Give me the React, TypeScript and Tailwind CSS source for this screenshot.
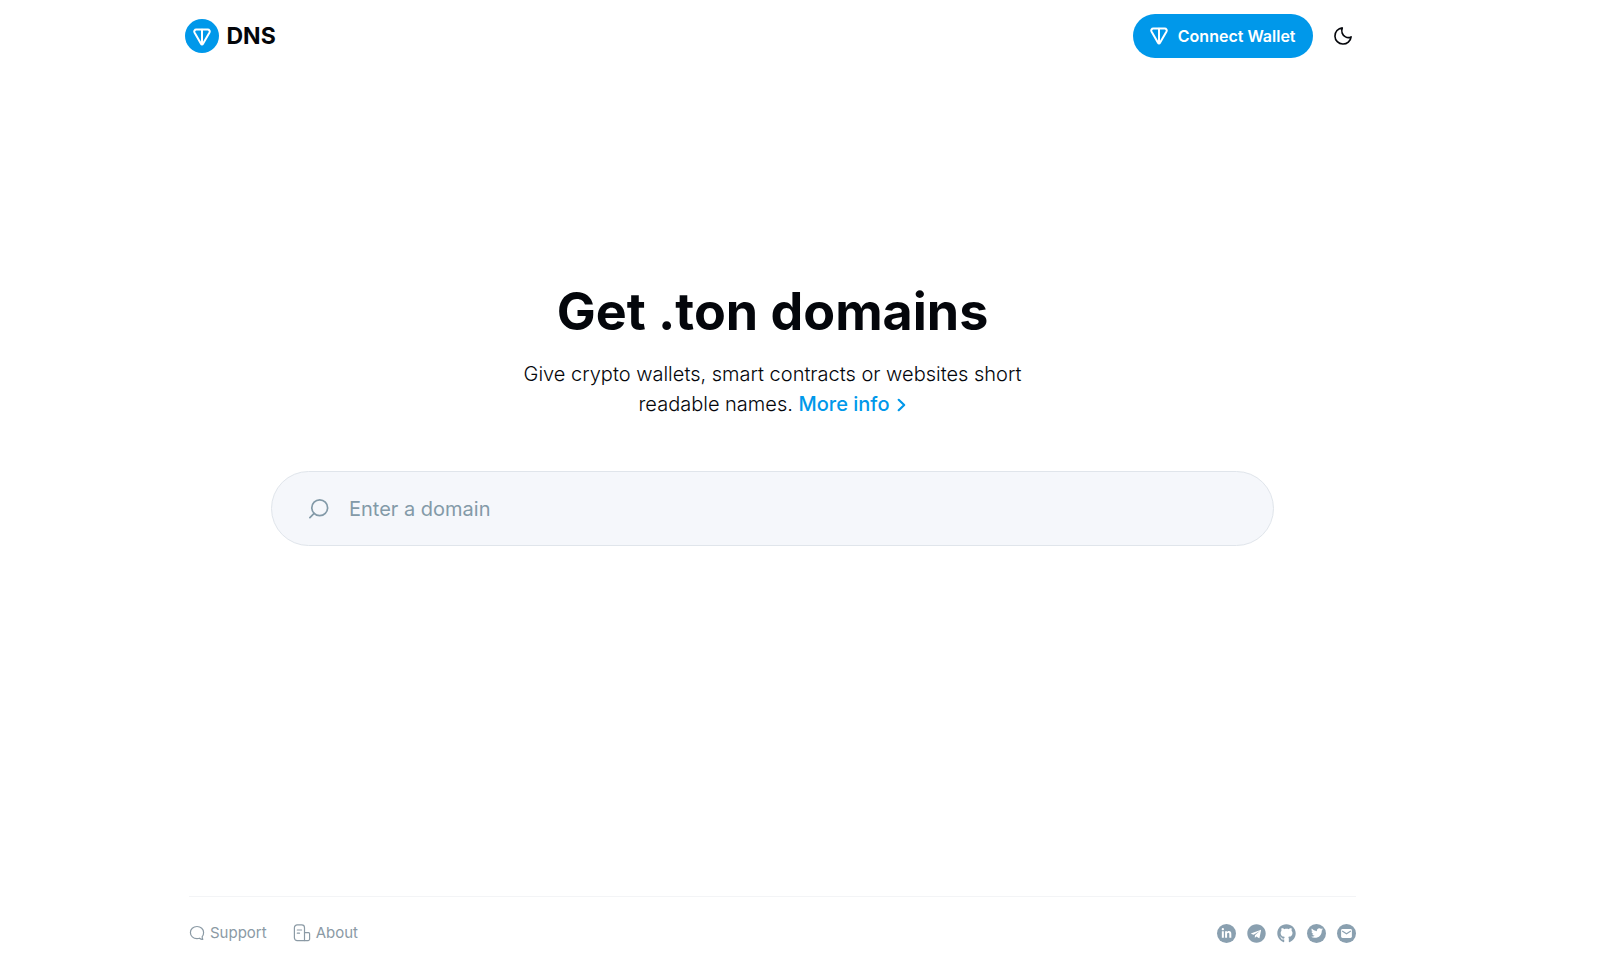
import type { ReactNode } from "react";
import { FaGithub, FaLinkedinIn, FaTelegram, FaTwitter } from "react-icons/fa";

function TonMark({ className }: { className?: string }) {
  return (
    <svg viewBox="0 0 18 18" fill="none" stroke="currentColor" strokeWidth="2" strokeLinecap="round" strokeLinejoin="round" className={className} aria-hidden="true">
      <path d="M3.200 1.600h11.600c1.500 0 2.400 1.500 1.700 2.800L10 15.700c-.5.9-1.500.9-2 0L1.500 4.400C.8 3.100 1.700 1.600 3.200 1.600Z" />
      <path d="M9 1.800v13.500" />
    </svg>
  );
}

function MoonIcon() {
  return (
    <svg viewBox="0 0 18 18" fill="none" stroke="currentColor" strokeWidth="1.600" strokeLinejoin="round" className="size-[18px]" aria-hidden="true">
      <path d="M8.300.9a8.100 8.100 0 1 0 8.800 8.900c-1.400.9-3.700 1.100-5.600.1C8.300 8.300 6.900 4.400 8.300.9Z" />
    </svg>
  );
}

function SearchIcon() {
  return (
    <svg viewBox="0 0 20 20" fill="none" stroke="currentColor" strokeWidth="1.700" strokeLinecap="round" className="size-5 shrink-0" aria-hidden="true">
      <circle cx="10.700" cy="8.800" r="7.900" />
      <path d="M5.100 14.400.9 18.600" />
    </svg>
  );
}

function SupportIcon() {
  return (
    <svg viewBox="0 0 16 16" fill="none" stroke="currentColor" strokeWidth="1.200" strokeLinecap="round" strokeLinejoin="round" className="size-4" aria-hidden="true">
      <path d="M13.200 11.600C14.200 10.500 14.600 9 14.600 7.500 14.600 4 11.800 1.500 8 1.500S1.400 4 1.400 7.500 4.200 13.600 8 13.600c.9 0 1.700-.1 2.500-.4 1 .9 2.200 1.300 3.300 1.200-.5-.9-.7-1.800-.6-2.800Z" />
    </svg>
  );
}

function AboutIcon() {
  return (
    <svg viewBox="0 0 18 18" fill="none" stroke="currentColor" strokeWidth="1.200" strokeLinecap="round" strokeLinejoin="round" className="size-[18px]" aria-hidden="true">
      <path d="M11.500 16.600H4.200a2.800 2.800 0 0 1-2.800-2.800V3.700A2.800 2.800 0 0 1 4.200.9h4.500a2.800 2.800 0 0 1 2.800 2.800v12.900Z" />
      <path d="M11.500 8.700h4.100a1 1 0 0 1 1 1v5.400a1.500 1.500 0 0 1-1.500 1.500h-3.600M4.300 6h4.300M4.300 9.200h2.200" />
    </svg>
  );
}

function MailGlyph() {
  return (
    <svg viewBox="0 0 12 10" className="h-[9px] w-[11px]" aria-hidden="true">
      <rect width="12" height="10" rx="1.600" fill="currentColor" />
      <path d="m1.200 2.300 4.800 3 4.800-3" fill="none" stroke="#8aa0b0" strokeWidth="1.200" />
    </svg>
  );
}

const disc = "flex size-[19px] items-center justify-center rounded-full bg-[#8aa0b0] text-white";

const socials: { name: string; icon: ReactNode }[] = [
  { name: "LinkedIn", icon: <span className={disc}><FaLinkedinIn className="size-[11px]" /></span> },
  { name: "Telegram", icon: <FaTelegram className="size-[19px]" /> },
  { name: "GitHub", icon: <FaGithub className="size-[19px]" /> },
  { name: "Twitter", icon: <span className={disc}><FaTwitter className="size-3" /></span> },
  { name: "Email", icon: <span className={disc}><MailGlyph /></span> },
];

export default function App() {
  return (
    <div className="flex min-h-screen flex-col bg-white pr-[55px] font-['Inter',sans-serif] text-[#04060b]">
      <header className="mx-auto flex w-full max-w-[1176px] items-center justify-between pt-[14px]">
        <a href="#" className="flex items-center gap-2">
          <span className="flex size-[34px] items-center justify-center rounded-full bg-[#0098ea] text-white">
            <TonMark className="mt-[2px] size-[18px]" />
          </span>
          <span className="text-[23px] font-bold">DNS</span>
        </a>
        <div className="flex items-center gap-[21px] pr-[9px]">
          <button type="button" className="flex h-11 items-center gap-[10px] rounded-full bg-[#0098ea] px-[17px] text-base font-semibold text-white">
            <TonMark className="size-[18px]" />
            Connect Wallet
          </button>
          <button type="button" aria-label="Toggle dark theme">
            <MoonIcon />
          </button>
        </div>
      </header>

      <main className="mx-auto flex w-full max-w-[1003px] flex-1 flex-col items-center pt-[220px] text-center">
        <h1 className="text-[52px] leading-[68px] font-bold">Get .ton domains</h1>
        <p className="mt-[13px] text-xl leading-[30px] font-light">
          Give crypto wallets, smart contracts or websites short
          <br />
          readable names.{" "}
          <a href="#" className="inline-flex items-center gap-2 font-medium text-[#0098ea]">
            More info
            <svg viewBox="0 0 9 14" fill="none" stroke="currentColor" strokeWidth="2.200" strokeLinecap="round" strokeLinejoin="round" className="mt-[2px] h-[14px] w-[9px]" aria-hidden="true">
              <path d="m1.700 1.800 5.500 5.200-5.500 5.200" />
            </svg>
          </a>
        </p>
        <label className="mt-[52px] flex h-[75px] w-full items-center gap-5 rounded-full border border-[#e0e5eb] bg-[#f5f7fb] px-[37px] text-[#839aa8]">
          <SearchIcon />
          <input type="text" aria-label="Domain" placeholder="Enter a domain" className="min-w-0 flex-1 bg-transparent text-xl text-[#04060b] outline-none placeholder:text-[#839aa8]" />
        </label>
      </main>

      <footer className="mx-auto flex w-full max-w-[1167px] items-center justify-between border-t border-[#f3f4f6] pt-6 pb-[15px] text-[#8b9aa5]">
        <nav className="flex items-center gap-[26px] text-[15px] leading-6">
          <a href="#" className="flex items-center gap-[5px]"><SupportIcon />Support</a>
          <a href="#" className="flex items-center gap-[5px]"><AboutIcon />About</a>
        </nav>
        <div className="flex items-center gap-[11px] text-[#8aa0b0]">
          {socials.map((s) => (
            <a key={s.name} href="#" aria-label={s.name}>{s.icon}</a>
          ))}
        </div>
      </footer>
    </div>
  );
}
